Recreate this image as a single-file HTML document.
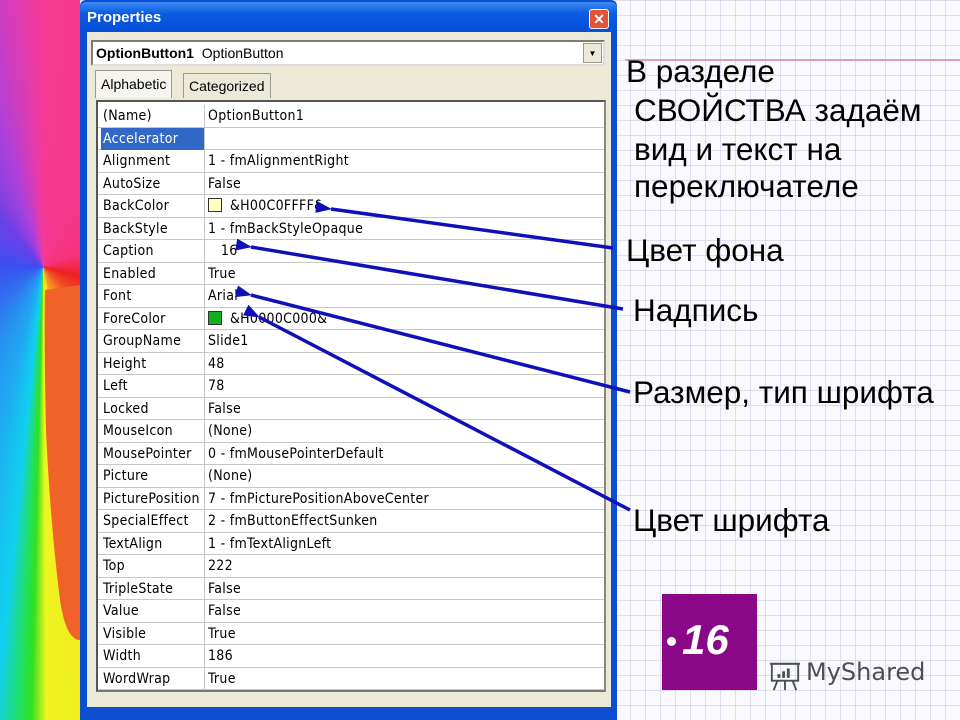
<!DOCTYPE html>
<html><head><meta charset="utf-8"><style>
*{margin:0;padding:0;box-sizing:border-box}
body{width:960px;height:720px;overflow:hidden;position:relative;font-family:"Liberation Sans",sans-serif;
background-color:#fafafe;
background-image:linear-gradient(to right,rgba(190,190,225,.45) 1px,transparent 1px),linear-gradient(to bottom,rgba(190,190,225,.45) 1px,transparent 1px);
background-size:15px 15px;}
.rain{position:absolute;left:0;top:0;width:80px;height:720px;
background:conic-gradient(from 0deg at 43px 267px,#f53a95 0deg,#f5337a 70deg,#ee2222 105deg,#f04a25 130deg,#f5a020 165deg,#f5e820 172deg,#eef520 179.5deg,#30e020 181.5deg,#20e060 183deg,#10d0f0 186deg,#20a8f0 195deg,#3070f0 230deg,#3a50f0 270deg,#6a40e8 320deg,#b040d8 345deg,#e03cb0 355deg,#f53a95 360deg);}
.win{position:absolute;left:80px;top:0;width:537px;height:720px;background:#0b4fd0;border-radius:6px 6px 0 0}
.title{position:absolute;left:0;top:2px;width:537px;height:30px;background:linear-gradient(#3a8af5,#0a5ae0 40%,#0650d8);border-radius:6px 6px 0 0}
.title b{position:absolute;left:7px;top:7px;color:#fff;font-size:15px}
.close{position:absolute;left:509px;top:7px;width:20px;height:20px;background:#e0553a;border:1px solid #fff;border-radius:3px;color:#fff;font-size:14px;font-weight:bold;text-align:center;line-height:18px}
.body{position:absolute;left:7px;top:32px;width:524px;height:675px;background:#ece9d8}
.combo{position:absolute;left:4px;top:8px;width:514px;height:26px;background:#fff;border:2px solid #7f7d73;border-right-color:#ddd;border-bottom-color:#ddd;font-size:14px;line-height:22px;padding-left:3px}
.combo .dd{position:absolute;right:1px;top:1px;width:19px;height:20px;background:#ece9d8;border:1px solid #999;font-size:8px;text-align:center;line-height:19px}
.tab{position:absolute;top:38px;height:28px;font-size:14px;line-height:26px;padding:0 5px;border:1px solid #999;border-bottom:none;background:#ece9d8}
.grid{position:absolute;left:9px;top:68px;width:510px;height:592px;background:#fff;border:2px solid #555;border-right-color:#888;border-bottom-color:#777;overflow:hidden}
.row{position:absolute;left:0;width:506px;height:22.5px;border-bottom:1px solid #c8c8c8;font-size:14px;line-height:22px;font-family:"DejaVu Sans Condensed","Liberation Sans",sans-serif;letter-spacing:.3px}
.row .n{position:absolute;left:3px;top:0;width:104px;height:22px;padding-left:2px;border-right:1px solid #c8c8c8;white-space:nowrap}
.row .v{position:absolute;left:110px;top:0;white-space:nowrap}
.sw{display:inline-block;width:14px;height:14px;border:1px solid #333;vertical-align:-2px;margin-right:8px}
.t{position:absolute;font-size:31.5px;color:#000;line-height:34px}
.badge{position:absolute;left:662px;top:594px;width:95px;height:96px;background:#8a0888}
.badge i{position:absolute;left:5px;top:43px;width:9px;height:9px;background:#fff;border-radius:50%}
.badge b{position:absolute;left:20px;top:22px;color:#fff;font-size:42px;font-style:italic}
.ms{position:absolute;left:806px;top:658px;font-size:24px;color:#4a5050;font-family:"DejaVu Sans",sans-serif}
</style></head><body>
<div class="rain"></div>
<svg style="position:absolute;left:0;top:0" width="80" height="720"><path d="M80,285 L80,640 Q66,640 60,600 Q50,520 46,430 Q44,340 45,290 Z" fill="#f0622a"/></svg>
<div class="win">
<div class="title"><b>Properties</b><div class="close">✕</div></div>
<div class="body">
<div class="combo"><b>OptionButton1</b>&nbsp; OptionButton<div class="dd">▼</div></div>
<div class="tab" style="left:8px;background:#f5f4ee">Alphabetic</div>
<div class="tab" style="left:96px;top:41px;height:25px;line-height:25px">Categorized</div>
<div class="grid">
<div class="row" style="top:3px"><span class="n">(Name)</span><span class="v">OptionButton1</span></div>
<div class="row" style="top:25.5px"><span class="n" style="background:#3168c5;color:#fff">Accelerator</span><span class="v"></span></div>
<div class="row" style="top:48px"><span class="n">Alignment</span><span class="v">1 - fmAlignmentRight</span></div>
<div class="row" style="top:70.5px"><span class="n">AutoSize</span><span class="v">False</span></div>
<div class="row" style="top:93px"><span class="n">BackColor</span><span class="v"><span class="sw" style="background:#ffffc0"></span>&amp;H00C0FFFF&amp;</span></div>
<div class="row" style="top:115.5px"><span class="n">BackStyle</span><span class="v">1 - fmBackStyleOpaque</span></div>
<div class="row" style="top:138px"><span class="n">Caption</span><span class="v">&nbsp;&nbsp;&nbsp;16</span></div>
<div class="row" style="top:160.5px"><span class="n">Enabled</span><span class="v">True</span></div>
<div class="row" style="top:183px"><span class="n">Font</span><span class="v">Arial</span></div>
<div class="row" style="top:205.5px"><span class="n">ForeColor</span><span class="v"><span class="sw" style="background:#10b020"></span>&amp;H0000C000&amp;</span></div>
<div class="row" style="top:228px"><span class="n">GroupName</span><span class="v">Slide1</span></div>
<div class="row" style="top:250.5px"><span class="n">Height</span><span class="v">48</span></div>
<div class="row" style="top:273px"><span class="n">Left</span><span class="v">78</span></div>
<div class="row" style="top:295.5px"><span class="n">Locked</span><span class="v">False</span></div>
<div class="row" style="top:318px"><span class="n">MouseIcon</span><span class="v">(None)</span></div>
<div class="row" style="top:340.5px"><span class="n">MousePointer</span><span class="v">0 - fmMousePointerDefault</span></div>
<div class="row" style="top:363px"><span class="n">Picture</span><span class="v">(None)</span></div>
<div class="row" style="top:385.5px"><span class="n">PicturePosition</span><span class="v">7 - fmPicturePositionAboveCenter</span></div>
<div class="row" style="top:408px"><span class="n">SpecialEffect</span><span class="v">2 - fmButtonEffectSunken</span></div>
<div class="row" style="top:430.5px"><span class="n">TextAlign</span><span class="v">1 - fmTextAlignLeft</span></div>
<div class="row" style="top:453px"><span class="n">Top</span><span class="v">222</span></div>
<div class="row" style="top:475.5px"><span class="n">TripleState</span><span class="v">False</span></div>
<div class="row" style="top:498px"><span class="n">Value</span><span class="v">False</span></div>
<div class="row" style="top:520.5px"><span class="n">Visible</span><span class="v">True</span></div>
<div class="row" style="top:543px"><span class="n">Width</span><span class="v">186</span></div>
<div class="row" style="top:565.5px"><span class="n">WordWrap</span><span class="v">True</span></div>
</div></div></div>
<div style="position:absolute;left:625px;top:59px;width:335px;height:2px;background:#e0a0b0"></div>
<div class="t" style="left:626px;top:54px">В разделе</div>
<div class="t" style="left:634px;top:93px">СВОЙСТВА задаём</div>
<div class="t" style="left:634px;top:132px">вид и текст на</div>
<div class="t" style="left:634px;top:169px">переключателе</div>
<div class="t" style="left:626px;top:233px">Цвет фона</div>
<div class="t" style="left:633px;top:293px">Надпись</div>
<div class="t" style="left:633px;top:375px">Размер, тип шрифта</div>
<div class="t" style="left:633px;top:503px">Цвет шрифта</div>
<svg style="position:absolute;left:0;top:0" width="960" height="720">
<defs><marker id="a" markerUnits="userSpaceOnUse" markerWidth="16" markerHeight="12" refX="1" refY="6" orient="auto"><path d="M16,0 L0,6 L16,12 Z" fill="#1010b8"/></marker></defs>
<g stroke="#1010b8" stroke-width="3.5" fill="none">
<line x1="613" y1="248" x2="331" y2="209" marker-end="url(#a)"/>
<line x1="623" y1="309" x2="251" y2="247" marker-end="url(#a)"/>
<line x1="630" y1="392" x2="251" y2="295" marker-end="url(#a)"/>
<line x1="630" y1="510" x2="259" y2="317" marker-end="url(#a)"/>
</g></svg>
<div class="badge"><i></i><b>16</b></div>
<svg style="position:absolute;left:768px;top:660px" width="34" height="32" viewBox="0 0 36 34"><g fill="none" stroke="#4a5050" stroke-width="2"><rect x="4" y="4" width="28" height="18"/><path d="M2 4h32M10 22l-4 10M18 22v10M26 22l4 10"/></g><g fill="#4a5050"><rect x="10" y="15" width="3" height="4"/><rect x="15" y="12" width="3" height="7"/><rect x="20" y="9" width="3" height="10"/></g></svg>
<div class="ms">MyShared</div>
</body></html>
